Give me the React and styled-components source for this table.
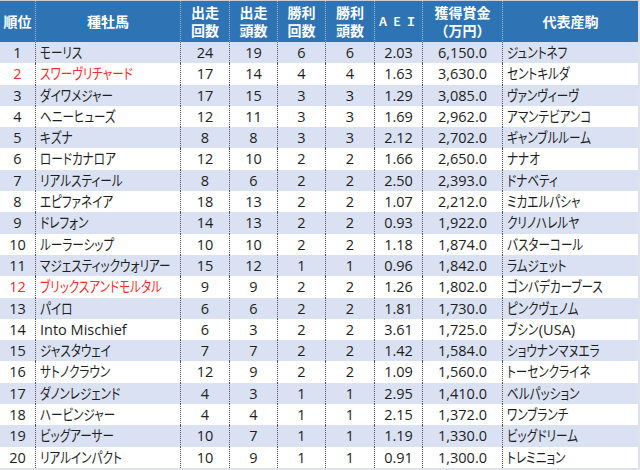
import React from "react";
import styled, { createGlobalStyle } from "styled-components";

const GlobalStyle = createGlobalStyle`
  html, body {
    margin: 0;
    padding: 0;
    background: #fff;
  }
`;

const COLS = "35px 145px 49px 48px 48px 49px 48px 80px 136px";

const rows = [
  [1, "モーリス", 24, 19, 6, 6, "2.03", "6,150.0", "ジュントネフ"],
  [2, "スワーヴリチャード", 17, 14, 4, 4, "1.63", "3,630.0", "セントキルダ", true],
  [3, "ダイワメジャー", 17, 15, 3, 3, "1.29", "3,085.0", "ヴァンヴィーヴ"],
  [4, "ヘニーヒューズ", 12, 11, 3, 3, "1.69", "2,962.0", "アマンテビアンコ"],
  [5, "キズナ", 8, 8, 3, 3, "2.12", "2,702.0", "ギャンブルルーム"],
  [6, "ロードカナロア", 12, 10, 2, 2, "1.66", "2,650.0", "ナナオ"],
  [7, "リアルスティール", 8, 6, 2, 2, "2.50", "2,393.0", "ドナベティ"],
  [8, "エピファネイア", 18, 13, 2, 2, "1.07", "2,212.0", "ミカエルパシャ"],
  [9, "ドレフォン", 14, 13, 2, 2, "0.93", "1,922.0", "クリノハレルヤ"],
  [10, "ルーラーシップ", 10, 10, 2, 2, "1.18", "1,874.0", "バスターコール"],
  [11, "マジェスティックウォリアー", 15, 12, 1, 1, "0.96", "1,842.0", "ラムジェット"],
  [12, "ブリックスアンドモルタル", 9, 9, 2, 2, "1.26", "1,802.0", "ゴンバデカーブース", true],
  [13, "パイロ", 6, 6, 2, 2, "1.81", "1,730.0", "ピンクヴェノム"],
  [14, "Into Mischief", 6, 3, 2, 2, "3.61", "1,725.0", "ブシン(USA)"],
  [15, "ジャスタウェイ", 7, 7, 2, 2, "1.42", "1,584.0", "ショウナンマヌエラ"],
  [16, "サトノクラウン", 12, 9, 2, 2, "1.09", "1,560.0", "トーセンクライネ"],
  [17, "ダノンレジェンド", 4, 3, 1, 1, "2.95", "1,410.0", "ベルパッション"],
  [18, "ハービンジャー", 4, 4, 1, 1, "2.15", "1,372.0", "ワンブランチ"],
  [19, "ビッグアーサー", 10, 7, 1, 1, "1.19", "1,330.0", "ビッグドリーム"],
  [20, "リアルインパクト", 10, 9, 1, 1, "0.91", "1,300.0", "トレミニョン"],
];

const Table = styled.div`
  width: 640px;
  height: 470px;
  box-sizing: border-box;
  border-top: 1px solid #c9ced8;
  border-right: 2px solid #dfe2ea;
  border-bottom: 2px solid #dfe2ea;
  font-family: "Open Sans", "Noto Sans CJK JP", sans-serif;
  color: #1e1e1e;
  overflow: hidden;
`;

const HeadRow = styled.div`
  display: grid;
  grid-template-columns: ${COLS};
  height: 41px;
  background: #2e74b5;
  color: #fff;
  font-weight: 700;
  font-size: 14px;
  line-height: 18px;
`;

const HeadCell = styled.div`
  display: flex;
  align-items: center;
  justify-content: center;
  text-align: center;
  border-left: ${({ $first }) => ($first ? "none" : "1px dotted #a9b8c9")};
  font-size: ${({ $small }) => ($small ? "11px" : "14px")};
  letter-spacing: ${({ $small }) => ($small ? "3px" : "0")};
`;

const Row = styled.div`
  display: grid;
  grid-template-columns: ${COLS};
  height: 21.3px;
  background: ${({ $band }) => ($band ? "#d9e1f2" : "#fff")};
  font-size: 14.5px;
  line-height: 21.3px;
`;

const Cell = styled.div`
  white-space: nowrap;
  display: flex;
  justify-content: ${({ $align }) => ($align === "left" ? "flex-start" : "center")};
  padding-left: ${({ $align }) => ($align === "left" ? "4px" : "0")};
  border-left: ${({ $first }) => ($first ? "none" : "1px dotted #555")};
  color: ${({ $red }) => ($red ? "#ff2a2a" : "inherit")};
`;

// katakana in the source font are narrow; squeeze the CJK face to match
const Kana = styled.span`
  display: inline-block;
  font-feature-settings: "palt";
  transform: scaleX(0.8);
  transform-origin: left center;
  margin-right: ${({ $w }) => `-${$w}px`};
`;

const Name = ({ text }) => {
  const parts = text.split(/([\u3040-\u30ff]+)/).filter(Boolean);
  return parts.map((p, i) =>
    /[\u3040-\u30ff]/.test(p) ? (
      <Kana key={i} $w={(p.length * 2.4).toFixed(1)}>{p}</Kana>
    ) : (
      <span key={i}>{p}</span>
    )
  );
};

export default function App() {
  return (
    <>
      <GlobalStyle />
      <Table>
        <HeadRow>
          <HeadCell $first>順位</HeadCell>
          <HeadCell>種牡馬</HeadCell>
          <HeadCell>出走<br />回数</HeadCell>
          <HeadCell>出走<br />頭数</HeadCell>
          <HeadCell>勝利<br />回数</HeadCell>
          <HeadCell>勝利<br />頭数</HeadCell>
          <HeadCell $small>ＡＥＩ</HeadCell>
          <HeadCell>獲得賞金<br />（万円）</HeadCell>
          <HeadCell>代表産駒</HeadCell>
        </HeadRow>
        {rows.map(([rank, sire, starts, runners, wins, winners, aei, prize, rep, red], i) => (
          <Row key={rank} $band={i % 2 === 0}>
            <Cell $first $red={red}>{rank}</Cell>
            <Cell $align="left" $red={red}><Name text={sire} /></Cell>
            <Cell>{starts}</Cell>
            <Cell>{runners}</Cell>
            <Cell>{wins}</Cell>
            <Cell>{winners}</Cell>
            <Cell>{aei}</Cell>
            <Cell>{prize}</Cell>
            <Cell $align="left"><Name text={rep} /></Cell>
          </Row>
        ))}
      </Table>
    </>
  );
}
